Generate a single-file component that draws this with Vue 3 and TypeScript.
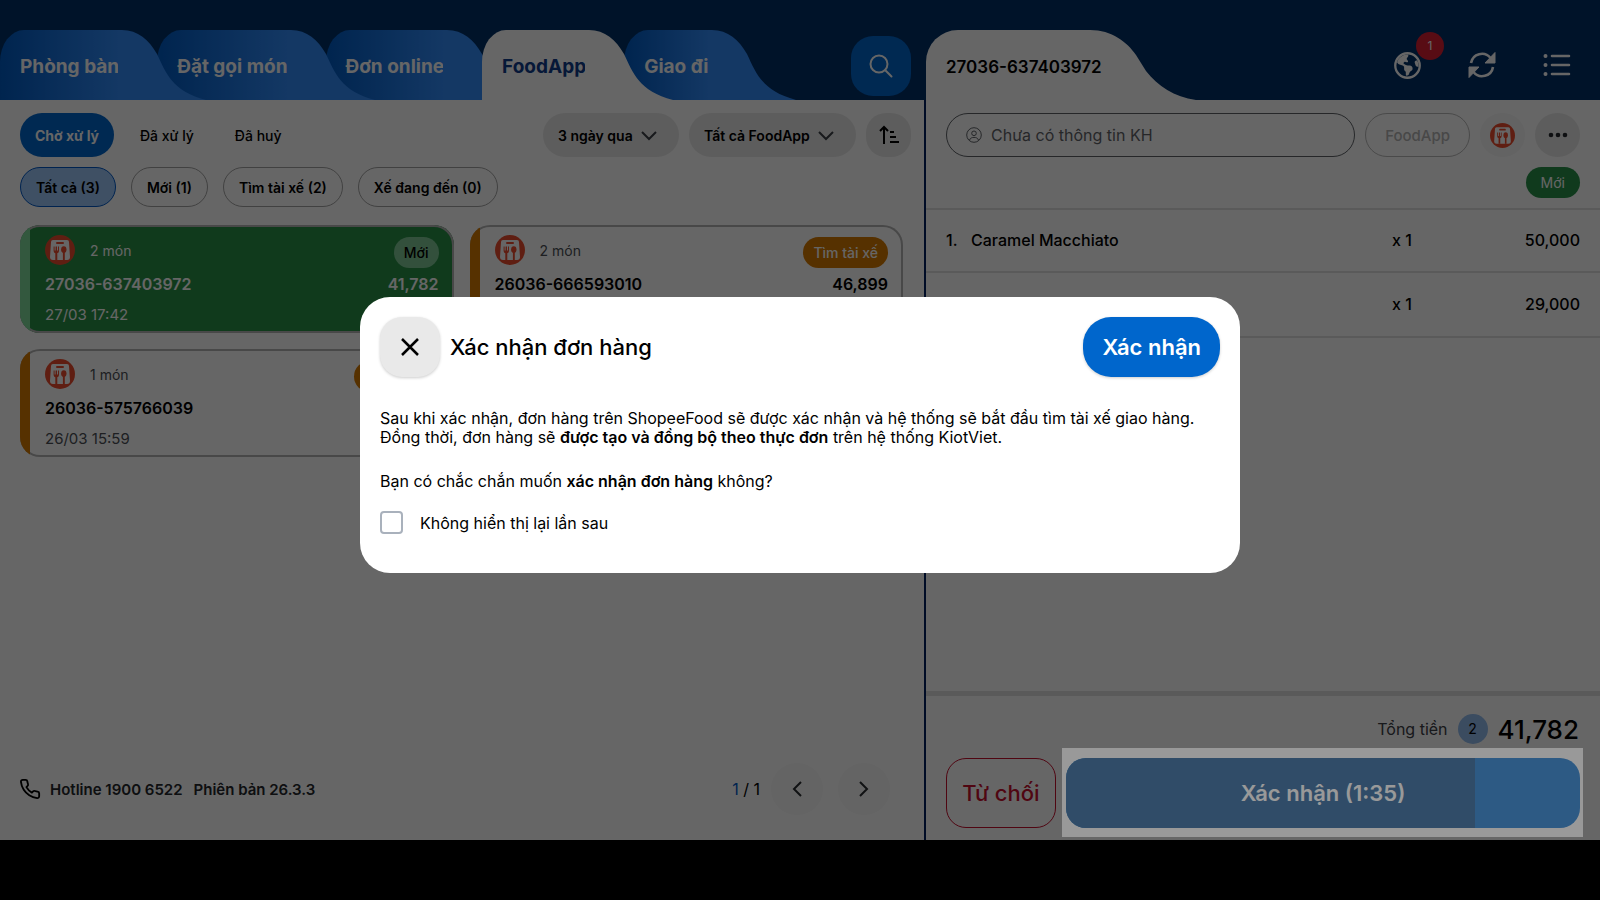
<script setup lang="ts">
import { ref } from 'vue'

interface Order {
  id: string
  count: string
  status: string
  total?: string
  time?: string
  fresh?: boolean
}

interface Item {
  name?: string
  qty: string
  price: string
}

const tabs = ['Phòng bàn', 'Đặt gọi món', 'Đơn online', 'FoodApp', 'Giao đi']
const activeTab = ref('FoodApp')

const stages = ['Chờ xử lý', 'Đã xử lý', 'Đã huỷ']
const activeStage = ref('Chờ xử lý')

const chips = ['Tất cả (3)', 'Mới (1)', 'Tìm tài xế (2)', 'Xế đang đến (0)']
const activeChip = ref('Tất cả (3)')

const orders: Order[] = [
  { id: '27036-637403972', count: '2 món', status: 'Mới', total: '41,782', time: '27/03 17:42', fresh: true },
  { id: '26036-666593010', count: '2 món', status: 'Tìm tài xế', total: '46,899' },
  { id: '26036-575766039', count: '1 món', status: 'Tìm tài xế', time: '26/03 15:59' },
]

const items: Item[] = [
  { name: 'Caramel Macchiato', qty: 'x 1', price: '50,000' },
  { qty: 'x 1', price: '29,000' },
]

const customer = ref('')
const dontShowAgain = ref(false)
const elapsed = 79.6
</script>

<template>
  <div class="device">
    <svg class="defs" aria-hidden="true">
      <symbol id="food-logo" viewBox="0 0 30 30">
        <circle cx="15" cy="15" r="15" fill="#ee4d2d" />
        <path d="M8 5h14a2 2 0 0 1 2 2l1 15a3 3 0 0 1-3 3H8a3 3 0 0 1-3-3L6 7a2 2 0 0 1 2-2z" fill="#fff" />
        <rect x="11" y="7" width="8" height="2" rx="1" fill="#ee4d2d" />
        <path d="M8.6 11.500v4.500q0 1.800 1.700 2.200V25h2V18.200q1.700-.4 1.700-2.200v-4.500h-1v4h-1v-4h-1.400v4h-1v-4z" fill="#ee4d2d" />
        <ellipse cx="18.800" cy="14.600" rx="2.700" ry="3.400" fill="#ee4d2d" />
        <rect x="17.900" y="17" width="1.900" height="8" fill="#ee4d2d" />
      </symbol>
    </svg>

    <div class="app">
      <section class="left">
        <header class="head">
          <nav class="tabs">
            <button
              v-for="(tab, i) in tabs"
              :key="tab"
              type="button"
              class="tab"
              :class="['tab-' + i, { active: tab === activeTab }]"
              @click="activeTab = tab"
            >
              <span class="tab-body">{{ tab }}</span>
              <svg class="tab-cap" viewBox="0 0 88 70"><path d="M0 0H4C20 0 31 10 39 24C48 43 54 61 88 70H0Z" /></svg>
            </button>
          </nav>
          <button type="button" class="search" aria-label="Tìm kiếm">
            <svg viewBox="0 0 24 24" width="24" height="24" fill="none" stroke="#fff" stroke-width="2" stroke-linecap="round"><circle cx="10" cy="10" r="8.500" /><path d="M16.300 16.300 22.500 22.500" /></svg>
          </button>
        </header>

        <div class="filters">
          <div class="stages">
            <button
              v-for="stage in stages"
              :key="stage"
              type="button"
              class="stage"
              :class="{ active: stage === activeStage }"
              @click="activeStage = stage"
            >{{ stage }}</button>
          </div>
          <span class="drop">
            <select aria-label="Thời gian"><option>3 ngày qua</option></select>
            <svg viewBox="0 0 16 10"><path d="M1 1l7 7 7-7" /></svg>
          </span>
          <span class="drop">
            <select aria-label="Nguồn đơn"><option>Tất cả FoodApp</option></select>
            <svg viewBox="0 0 16 10"><path d="M1 1l7 7 7-7" /></svg>
          </span>
          <button type="button" class="sort" aria-label="Sắp xếp">
            <svg viewBox="0 0 20 20" width="20" height="20" fill="none" stroke="#000" stroke-width="2"><path d="M5 19V2M1 6l4-4 4 4M11 7h4M11 12h6M11 17h9" /></svg>
          </button>
        </div>

        <div class="chips">
          <button
            v-for="chip in chips"
            :key="chip"
            type="button"
            class="chip"
            :class="{ active: chip === activeChip }"
            @click="activeChip = chip"
          >{{ chip }}</button>
        </div>

        <div class="orders">
          <article v-for="order in orders" :key="order.id" class="order" :class="{ fresh: order.fresh }">
            <div class="row top">
              <svg class="logo"><use href="#food-logo" /></svg>
              <span class="count">{{ order.count }}</span>
              <span class="status">{{ order.status }}</span>
            </div>
            <div class="row main">
              <strong>{{ order.id }}</strong>
              <strong v-if="order.total">{{ order.total }}</strong>
            </div>
            <div class="row time"><span v-if="order.time">{{ order.time }}</span></div>
          </article>
        </div>

        <footer class="foot">
          <svg viewBox="0 0 24 24" width="22" height="22" fill="none" stroke="#000" stroke-width="2" stroke-linejoin="round"><path d="M22 16.920v3a2 2 0 0 1-2.180 2 19.790 19.790 0 0 1-8.630-3.070 19.500 19.500 0 0 1-6-6 19.790 19.790 0 0 1-3.070-8.670A2 2 0 0 1 4.110 2h3a2 2 0 0 1 2 1.720c.127.960.361 1.903.700 2.810a2 2 0 0 1-.450 2.110L8.090 9.910a16 16 0 0 0 6 6l1.270-1.270a2 2 0 0 1 2.110-.450c.907.339 1.850.573 2.810.700A2 2 0 0 1 22 16.920z" /></svg>
          <span class="info">Hotline 1900 6522</span>
          <span class="info">Phiên bản 26.3.3</span>
          <span class="grow"></span>
          <span class="page"><b>1</b> / 1</span>
          <button type="button" class="nav" aria-label="Trang trước"><svg viewBox="0 0 10 16"><path d="M9 1 2 8l7 7" /></svg></button>
          <button type="button" class="nav" aria-label="Trang sau"><svg viewBox="0 0 10 16"><path d="M1 1l7 7-7 7" /></svg></button>
        </footer>
      </section>

      <section class="right">
        <header class="head">
          <div class="sheet">
            <span class="sheet-body">27036-637403972</span>
            <svg viewBox="0 0 106 70"><path d="M0 0C22 0 37 12 46 25L56 41C68 56 84 67 106 70H0Z" /></svg>
          </div>
          <div class="tools">
            <button type="button" aria-label="Thông báo">
              <svg viewBox="0 0 512 512" width="27" height="27" fill="#fff">
                <circle cx="256" cy="256" r="232" fill="none" stroke="#fff" stroke-width="44" />
                <path d="M57.700 193l9.400 16.400c8.300 14.500 21.900 25.200 38 29.800L163 255.700c17.200 4.900 29 20.600 29 38.500v39.900c0 11 6.200 21 16 25.900s16 14.900 16 25.900v39c0 15.600 14.900 26.900 29.900 22.600c16.100-4.600 28.600-17.500 32.700-33.800l2.800-11.200c4.200-16.900 15.200-31.400 30.300-40l8.100-4.600c15-8.500 24.200-24.500 24.200-41.700v-8.300c0-12.700-5.100-24.900-14.100-33.900l-3.900-3.900c-9-9-21.200-14.100-33.900-14.100H257c-11.100 0-22.100-2.900-31.800-8.400l-34.500-19.700c-4.300-2.500-7.600-6.500-9.200-11.200c-3.200-9.600 1.100-20 10.200-24.500l5.900-3c6.600-3.300 14.300-3.900 21.300-1.500l23.200 7.700c8.200 2.700 17.200-.4 21.900-7.500c4.700-7 4.200-16.300-1.200-22.800l-13.600-16.300c-10-12-9.900-29.500 .3-41.300l15.700-18.300c8.800-10.300 10.200-25 3.500-36.700l-2.400-4.200c-3.500-.2-6.900-.3-10.400-.3C163.100 48 84.400 108.900 57.700 193zM464 256c0-36.800-9.600-71.400-26.400-101.500L412 164.800c-15.700 6.300-23.800 23.800-18.500 39.800l16.900 50.700c3.500 10.400 12 18.300 22.600 20.900l29.100 7.300c1.200-9 1.800-18.200 1.800-27.500z" />
              </svg>
              <span class="badge">1</span>
            </button>
            <button type="button" aria-label="Đồng bộ">
              <svg viewBox="0 0 28 28" width="28" height="28"><path d="M3 12A11 11 0 0 1 22.500 7M25 16A11 11 0 0 1 5.500 21" fill="none" stroke="#fff" stroke-width="2.600" /><path d="M27 1.500V12H17zM1 26.500V16h10z" fill="#fff" stroke="#fff" stroke-linejoin="round" /></svg>
            </button>
            <button type="button" aria-label="Danh mục">
              <svg viewBox="0 0 28 28" width="28" height="28" fill="none" stroke="#fff" stroke-width="2.600" stroke-linecap="round"><path d="M9 5h17M9 14h17M9 23h17" /><path d="M2.500 5h.01M2.500 14h.01M2.500 23h.01" stroke-width="4" /></svg>
            </button>
          </div>
        </header>

        <div class="customer">
          <label class="who">
            <svg viewBox="0 0 16 16" width="16" height="16" fill="none" stroke="#5f6368"><circle cx="8" cy="8" r="7.300" /><circle cx="8" cy="6.300" r="2.300" /><path d="M3.500 13c.8-2 2.500-2.600 4.500-2.600s3.700.6 4.500 2.600" /></svg>
            <input v-model="customer" type="text" placeholder="Chưa có thông tin KH" aria-label="Khách hàng" />
          </label>
          <button type="button" class="channel" disabled>FoodApp</button>
          <button type="button" class="round pale" aria-label="ShopeeFood"><svg width="25" height="25"><use href="#food-logo" /></svg></button>
          <button type="button" class="round" aria-label="Thêm"><svg viewBox="0 0 20 6" width="20" height="6"><circle cx="3" cy="3" r="2.300" /><circle cx="10" cy="3" r="2.300" /><circle cx="17" cy="3" r="2.300" /></svg></button>
        </div>
        <div class="state"><span>Mới</span></div>

        <table class="items">
          <tbody>
            <tr v-for="(item, i) in items" :key="i">
              <td class="no">{{ i + 1 }}.</td>
              <td>{{ item.name }}</td>
              <td class="qty">{{ item.qty }}</td>
              <td class="price">{{ item.price }}</td>
            </tr>
          </tbody>
        </table>

        <div class="pay">
          <div class="sum">
            <span>Tổng tiền</span>
            <span class="qty-dot">2</span>
            <strong>41,782</strong>
          </div>
          <div class="actions">
            <button type="button" class="reject">Từ chối</button>
            <div class="focus">
              <button type="button" class="accept">
                <span class="bar" :style="{ width: elapsed + '%' }"></span>
                <span class="accept-label">Xác nhận (1:35)</span>
              </button>
            </div>
          </div>
        </div>
      </section>

      <div class="overlay">
        <div class="dialog" role="dialog" aria-labelledby="dialog-title">
          <div class="dialog-head">
            <button type="button" class="close" aria-label="Đóng"><svg viewBox="0 0 18 18" width="18" height="18" fill="none" stroke="#000" stroke-width="2.500"><path d="M1 1l16 16M17 1 1 17" /></svg></button>
            <h2 id="dialog-title">Xác nhận đơn hàng</h2>
            <button type="button" class="ok">Xác nhận</button>
          </div>
          <p>Sau khi xác nhận, đơn hàng trên ShopeeFood sẽ được xác nhận và hệ thống sẽ bắt đầu tìm tài xế giao hàng.<br />Đồng thời, đơn hàng sẽ <b>được tạo và đồng bộ theo thực đơn</b> trên hệ thống KiotViet.</p>
          <p>Bạn có chắc chắn muốn <b>xác nhận đơn hàng</b> không?</p>
          <label class="again"><input v-model="dontShowAgain" type="checkbox" />Không hiển thị lại lần sau</label>
        </div>
      </div>
    </div>
  </div>
</template>

<style>
body {
  margin: 0;
  background: #000;
}
</style>

<style scoped>
.device {
  box-sizing: border-box;
  min-height: 100vh;
  padding-bottom: 60px;
  display: flex;
  background: #000;
  color: #000;
  font-family: Inter, 'Noto Sans', sans-serif;
  font-size: 16px;
}
.device *,
.device *::before,
.device *::after {
  box-sizing: border-box;
}
.defs {
  position: absolute;
  width: 0;
  height: 0;
}
button,
input,
select {
  font: inherit;
  color: inherit;
  border: 0;
  margin: 0;
  padding: 0;
  background: none;
}
svg {
  flex: none;
  display: block;
}
.grow {
  flex: 1;
}
.app {
  position: relative;
  flex: 1;
  display: grid;
  grid-template-columns: 924fr 674fr;
  gap: 2px;
  background: #002060;
}
.left,
.right {
  display: flex;
  flex-direction: column;
  min-width: 0;
  background: #fff;
}
.head {
  display: flex;
  align-items: flex-end;
  height: 100px;
  padding-top: 30px;
  background: #003068;
}
.left .head {
  justify-content: space-between;
  padding-right: 15px;
  margin-right: -2px;
}

.tabs {
  display: flex;
}
.tab {
  display: flex;
  height: 70px;
  margin-right: -49px;
  position: relative;
  color: #fff;
  font-size: 19px;
  font-weight: 700;
}
.tab-0 { z-index: 4; }
.tab-1 { z-index: 3; }
.tab-2 { z-index: 2; }
.tab-4 { z-index: 1; }
.tab.active { z-index: 5; }
.tab-body {
  display: flex;
  align-items: center;
  height: 70px;
  padding: 2px 0 0 20px;
  border-radius: 24px 0 0 0 / 32px 0 0 0;
  background: linear-gradient(90deg, #005bc4, #328cfa);
}
.tab-cap {
  width: 88px;
  height: 70px;
  margin-left: -1px;
  fill: #328cfa;
}
.active .tab-body {
  background: #fff;
  color: #0f3c8c;
}
.active .tab-cap {
  fill: #fff;
}
.search {
  display: grid;
  place-items: center;
  width: 60px;
  height: 60px;
  margin-bottom: 4px;
  border-radius: 22px;
  background: #0066cc;
}

.filters {
  display: flex;
  gap: 10px;
  padding: 13px 13px 0 20px;
  font-size: 14px;
  font-weight: 500;
}
.stages {
  flex: 1;
  display: flex;
  gap: 11px;
}
.stage {
  height: 44px;
  padding: 0 15px;
  border-radius: 22px;
  white-space: nowrap;
}
.stage.active {
  background: #0066cc;
  color: #fff;
  font-weight: 700;
}
.drop {
  position: relative;
  display: flex;
}
.drop select {
  appearance: none;
  height: 44px;
  padding: 0 46px 0 15px;
  border-radius: 22px;
  background: #e9e9e9;
  font-weight: 600;
}
.drop svg {
  position: absolute;
  right: 22px;
  top: 18px;
  width: 16px;
  height: 10px;
  fill: none;
  stroke: #3c4046;
  stroke-width: 2;
  pointer-events: none;
}
.sort {
  display: grid;
  place-items: center;
  width: 45px;
  height: 44px;
  border-radius: 20px;
  background: #e9e9e9;
}
.chips {
  display: flex;
  gap: 15px;
  padding: 10px 20px 0;
  font-size: 14px;
  font-weight: 600;
}
.chip {
  height: 40px;
  padding: 0 15px;
  border: 1px solid #a3a3a3;
  border-radius: 20px;
  white-space: nowrap;
}
.chip.active {
  border-color: #0059c8;
  background: #9fc8fa;
}

.orders {
  display: grid;
  grid-template-columns: 1fr 1fr;
  gap: 16px;
  padding: 18px 21px 0 20px;
}
.order {
  position: relative;
  height: 108px;
  padding: 10px 15px 0 25px;
  border-radius: 20px;
  overflow: hidden;
  background: #fff;
  box-shadow: inset 0 0 0 2px #b4b4b4;
}
.order::before {
  content: '';
  position: absolute;
  inset: 0 auto 0 0;
  width: 10px;
  background: #d87a00;
}
.row {
  display: flex;
  align-items: center;
  justify-content: space-between;
}
.top {
  height: 34px;
  align-items: flex-start;
}
.logo {
  width: 30px;
  height: 30px;
}
.count {
  flex: 1;
  padding-left: 15px;
  font-size: 14px;
  line-height: 32px;
  color: #4b4f55;
}
.status {
  height: 31px;
  margin-top: 2px;
  padding: 0 10px;
  border-radius: 16px;
  line-height: 31px;
  background: #d87a00;
  color: #fff;
  font-size: 14px;
  font-weight: 500;
}
.main {
  height: 30px;
}
.main strong {
  font-weight: 600;
}
.time {
  height: 30px;
  font-size: 15px;
  color: #4b4f55;
}
.order.fresh {
  background: #289148;
  color: #fff;
}
.fresh::before {
  background: #7fdb9b;
}
.fresh .count,
.fresh .time {
  color: #fff;
}
.fresh .status {
  background: #80c896;
  color: #000;
}

.foot {
  display: flex;
  align-items: center;
  gap: 11px;
  margin-top: auto;
  padding: 0 34px 25px 19px;
}
.foot > svg {
  margin-right: -2px;
}
.info {
  font-size: 15px;
  font-weight: 600;
  color: #24272b;
}
.page b {
  font-weight: 400;
  color: #0059c8;
}
.nav {
  display: grid;
  place-items: center;
  width: 52px;
  height: 52px;
  border-radius: 50%;
  background: #fafafa;
}
.nav + .nav {
  margin-left: 4px;
}
.nav svg {
  width: 10px;
  height: 16px;
  fill: none;
  stroke: #2a2d31;
  stroke-width: 2;
}

.right .head {
  justify-content: space-between;
}
.sheet {
  display: flex;
  font-size: 17px;
  font-weight: 600;
}
.sheet-body {
  display: flex;
  align-items: center;
  height: 70px;
  padding: 3px 0 0 20px;
  margin-right: -12px;
  border-top-left-radius: 32px;
  z-index: 1;
  background: linear-gradient(90deg, #fff calc(100% - 12px), transparent calc(100% - 12px));
}
.sheet svg {
  width: 106px;
  height: 70px;
  fill: #fff;
}
.tools {
  display: flex;
  align-items: center;
  gap: 47px;
  height: 70px;
  padding-right: 29px;
}
.tools button {
  position: relative;
}
.badge {
  position: absolute;
  left: 22px;
  top: -20px;
  width: 28px;
  height: 28px;
  border-radius: 50%;
  background: #dc1f33;
  color: #fff;
  font-size: 12px;
  line-height: 28px;
  text-align: center;
}
.customer {
  display: flex;
  gap: 10px;
  padding: 13px 20px 0;
}
.who {
  flex: 1;
  display: flex;
  align-items: center;
  gap: 9px;
  height: 44px;
  padding: 0 19px;
  border: 1px solid #5f6368;
  border-radius: 22px;
}
.who input {
  flex: 1;
  min-width: 0;
  outline: 0;
}
.who input::placeholder {
  color: #5f6368;
  opacity: 1;
}
.channel {
  height: 44px;
  padding: 0 19px;
  border: 1px solid #b8b8b8;
  border-radius: 22px;
  color: #b4b4b4;
  font-size: 15px;
  font-weight: 500;
}
.round {
  display: grid;
  place-items: center;
  width: 45px;
  height: 44px;
  border-radius: 22px;
  background: #e9e9e9;
  fill: #24272b;
}
.round.pale {
  background: #f7f7f7;
}
.state {
  display: flex;
  justify-content: flex-end;
  padding: 10px 20px;
  border-bottom: 2px solid #e2e2e2;
}
.state span {
  height: 31px;
  padding: 0 15px;
  border-radius: 16px;
  background: #28914a;
  color: #fff;
  font-size: 14px;
  line-height: 31px;
}
.items {
  width: 100%;
  border-collapse: separate;
  border-spacing: 0;
  font-weight: 500;
}
.items td {
  height: 65px;
  padding: 0 0 1px;
  border-bottom: 2px solid #e2e2e2;
}
.items tr:first-child td {
  height: 63px;
}
.items .no {
  width: 45px;
  padding-left: 20px;
}
.items .qty {
  width: 88px;
}
.items .price {
  width: 120px;
  padding-right: 20px;
  text-align: right;
}
.pay {
  margin-top: auto;
  padding: 15px 20px 12px;
  border-top: 5px solid #e0e0e0;
}
.sum {
  display: flex;
  align-items: center;
  justify-content: flex-end;
  gap: 10px;
  height: 36px;
  padding-right: 1px;
  margin-bottom: 11px;
  color: #3c4046;
}
.sum strong {
  color: #000;
  font-size: 26px;
  font-weight: 500;
}
.qty-dot {
  width: 30px;
  height: 30px;
  border-radius: 50%;
  background: #94bdf0;
  color: #000;
  font-size: 14px;
  line-height: 30px;
  text-align: center;
}
.actions {
  display: flex;
  gap: 10px;
  font-size: 22px;
}
.reject {
  height: 70px;
  width: 110px;
  border: 1px solid #c8102e;
  border-radius: 20px;
  color: #c8102e;
  font-weight: 500;
}
.focus {
  position: relative;
  flex: 1;
}
.focus::after {
  content: '';
  position: absolute;
  z-index: 20;
  inset: -10px -3px -9px -4px;
  backdrop-filter: brightness(1.5);
  pointer-events: none;
}
.accept {
  position: relative;
  display: block;
  width: 100%;
  height: 70px;
  border-radius: 20px;
  overflow: hidden;
  background: #4b96dc;
  color: #fff;
  font-weight: 600;
}
.bar {
  position: absolute;
  inset: 0 auto 0 0;
  background: #5080ad;
}
.accept-label {
  position: relative;
}

.overlay {
  position: absolute;
  z-index: 10;
  inset: 0;
  display: flex;
  align-items: flex-start;
  justify-content: center;
  padding-top: 33vh;
  background: rgba(0, 0, 0, 0.6);
}
.dialog {
  width: 55%;
  padding: 20px 20px 39px;
  border-radius: 30px;
  background: #fff;
}
.dialog-head {
  display: flex;
  align-items: center;
  gap: 10px;
  margin-bottom: 32px;
}
.dialog h2 {
  flex: 1;
  margin: 0;
  font-size: 22px;
  font-weight: 500;
}
.close,
.ok {
  display: grid;
  place-items: center;
  height: 60px;
  border-radius: 22px;
  box-shadow: 0 1px 3px rgba(0, 0, 0, 0.2);
}
.close {
  width: 60px;
  background: #e9e9e9;
}
.ok {
  padding: 0 19px;
  border-radius: 28px;
  background: #0066cc;
  color: #fff;
  font-size: 22px;
  font-weight: 600;
}
.dialog p {
  margin: 0 0 25px;
  line-height: 19px;
}
.dialog p + p {
  margin-bottom: 20px;
}
.dialog b {
  font-weight: 600;
}
.again {
  display: flex;
  align-items: center;
  gap: 17px;
}
.again input {
  appearance: none;
  width: 23px;
  height: 23px;
  border: 2px solid #a9b1bc;
  border-radius: 4px;
}
.again input:checked {
  background: #0066cc;
}
</style>
